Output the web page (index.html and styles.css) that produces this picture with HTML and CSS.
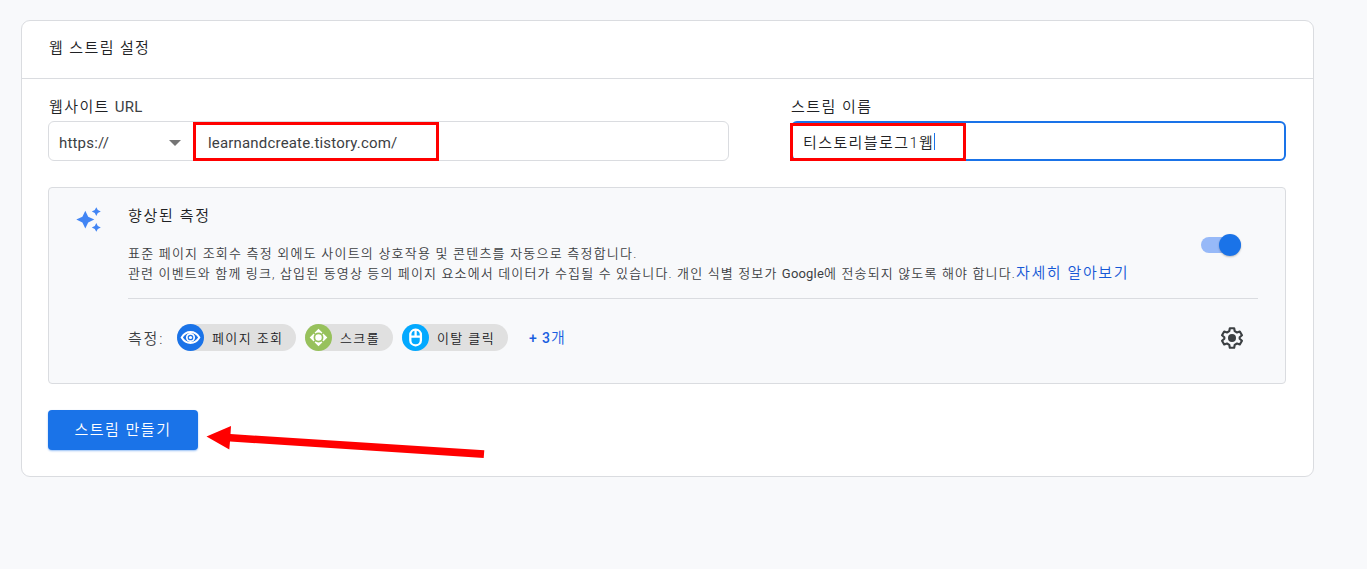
FILE: index.html
```html
<!DOCTYPE html>
<html lang="ko">
<head>
  <meta charset="UTF-8" />
  <meta name="viewport" content="width=device-width, initial-scale=1.0"/>
  <title>웹 스트림 설정</title>

  <link rel="stylesheet" href="styles.css">
</head>

<body>
  <main class="card">
    <header class="card-header"><h1>웹 스트림 설정</h1></header>

    <div class="card-body">
      <div class="fields">
        <div class="field field-url">
          <div class="label">웹사이트 <span class="latin">URL</span></div>
          <div class="input">
            <div class="protocol"><span>https://</span><i class="arrow-down"></i></div>
            <div class="url">learnandcreate.tistory.com/</div>
            <div class="mark mark-url"></div>
          </div>
        </div>
        <div class="field field-name">
          <div class="label">스트림 이름</div>
          <div class="input focused">
            <span class="name">티스토리블로그1웹</span><i class="caret"></i>
            <div class="mark mark-name"></div>
          </div>
        </div>
      </div>

      <section class="enhanced">
        <svg class="sparkle" width="26" height="26" viewBox="0 0 26 26" fill="#4285f4">
          <path d="M9.3 3.7 L12.2 9.7 L18.3 12.6 L12.2 15.5 L9.3 21.5 L6.4 15.5 L0.3 12.6 L6.4 9.7 Z"/>
          <path d="M20.3 0.2 L21.8 3.1 L24.8 4.6 L21.8 6.1 L20.3 9 L18.8 6.1 L15.8 4.6 L18.8 3.1 Z"/>
          <path d="M20.3 16 L21.8 18.9 L24.8 20.4 L21.8 21.9 L20.3 24.8 L18.8 21.9 L15.8 20.4 L18.8 18.9 Z"/>
        </svg>

        <div class="enhanced-body">
          <div class="intro">
            <div>
              <h2>향상된 측정</h2>
              <p>표준 페이지 조회수 측정 외에도 사이트의 상호작용 및 콘텐츠를 자동으로 측정합니다.</p>
              <p class="second">관련 이벤트와 함께 링크, 삽입된 동영상 등의 페이지 요소에서 데이터가 수집될 수 있습니다. 개인 식별 정보가 <span class="latin">Google</span>에 전송되지 않도록 해야 합니다.<a class="more">자세히 알아보기</a></p>
            </div>
            <div class="toggle"><i class="knob"></i></div>
          </div>

          <div class="measure">
            <span class="measure-label">측정:</span>
            <div class="chip chip-view">
              <svg class="chip-icon blue" viewBox="0 0 27 27" fill="none" stroke="#fff">
                <path stroke-width="2" d="M4.7 13.5 Q8 8 13.5 8 T22.3 13.5 Q19 19 13.5 19 T4.7 13.5 Z"/>
                <circle cx="13.5" cy="13.5" r="3.7" stroke-width="1.7"/>
                <circle cx="13.5" cy="13.5" r="1.6" fill="#fff" stroke="none"/>
              </svg>
              <span>페이지 조회</span>
            </div>
            <div class="chip chip-scroll">
              <svg class="chip-icon green" viewBox="0 0 27 27">
                <path fill="#fff" d="M13.5 4.7 L22.3 13.5 L13.5 22.3 L4.7 13.5 Z"/>
                <path stroke="#97c15c" stroke-width="1.2" d="M7.5 7.5 L19.5 19.5 M19.5 7.5 L7.5 19.5"/>
                <circle cx="13.5" cy="13.5" r="4.1" fill="#fff" stroke="#97c15c" stroke-width="1.7"/>
              </svg>
              <span>스크롤</span>
            </div>
            <div class="chip chip-click">
              <svg class="chip-icon cyan" viewBox="0 0 27 27" fill="none" stroke="#fff" stroke-width="2.3">
                <rect x="8.3" y="5.7" width="10.6" height="15.6" rx="5.1"/>
                <path d="M8.3 12.7 H18.9 M13.6 5.7 V12.7"/>
              </svg>
              <span>이탈 클릭</span>
            </div>
            <a class="plus"><b>+ 3</b>개</a>
            <svg class="gear" width="26" height="26" viewBox="0 0 24 24" fill="none" stroke="#3c4043">
              <path stroke-width="2" stroke-linejoin="round" d="M10 3 H14 L14.5 5.7 L16.6 6.9 L19.2 6 L21.2 9.5 L19.1 11.3 V12.7 L21.2 14.5 L19.2 18 L16.6 17.1 L14.5 18.3 L14 21 H10 L9.5 18.3 L7.4 17.1 L4.8 18 L2.8 14.5 L4.9 12.7 V11.3 L2.8 9.5 L4.8 6 L7.4 6.9 L9.5 5.7 Z"/>
              <circle cx="12" cy="12" r="3.7" fill="#3c4043" stroke="none"/>
            </svg>
          </div>
        </div>
      </section>

      <div class="actions">
        <button class="create">스트림 만들기</button>
        <svg class="pointer" width="280" height="36" viewBox="0 0 280 36" fill="#f00">
          <path d="M0.5 10.5 L25 0 L24.5 8 L278.3 24.3 L277.7 32 L24 15.5 L23.3 23.5 Z"/>
        </svg>
      </div>
    </div>
  </main>
</body>
</html>
```
FILE: styles.css
```css
* {
  box-sizing: border-box;
}
body {
  margin: 0;
  padding: 20px 53px 0 21px;
  background-color: #f8f9fb;
  color: #202124;
  font-family: Roboto, "Noto Sans CJK KR", sans-serif;
  font-size: 15px;
  font-weight: 350;
  letter-spacing: 1.4px;
  white-space: nowrap;
}
h1, h2, p {
  margin: 0;
  font-weight: inherit;
}
.latin, .protocol, .url {
  color: #3c4043;
  font-weight: 400;
  letter-spacing: 0.18px;
}
.card {
  height: 457px;
  background-color: #fff;
  border: 1px solid #dadce0;
  border-radius: 9px;
}
.card-header {
  height: 58px;
  padding: 0 27px;
  border-bottom: 1px solid #dadce0;
}
h1 {
  font-size: 15px;
  line-height: 54px;
}
.card-body {
  padding: 17px 27px 0 26px;
}
.fields {
  display: flex;
  justify-content: space-between;
}
.field-url {
  width: 681px;
}
.field-name {
  width: 495px;
}
.label {
  height: 25px;
  line-height: 22px;
  padding-left: 1px;
}
.field-name .label {
  padding-left: 0;
  letter-spacing: 1.5px;
}
.input {
  position: relative;
  display: flex;
  align-items: center;
  height: 40px;
  border: 1px solid #dadce0;
  border-radius: 6px;
}
.input.focused {
  border: 2px solid #1a73e8;
  padding-left: 10px;
}
.protocol {
  display: flex;
  align-items: center;
  justify-content: space-between;
  width: 146px;
  height: 100%;
  padding: 3px 13px 0 10px;
  border-right: 1px solid #dadce0;
}
.arrow-down {
  border: 6px solid transparent;
  border-top-color: #757575;
  border-bottom: 0;
}
.url {
  padding: 3px 0 0 13px;
}
.caret {
  width: 1px;
  height: 17px;
  background-color: #1a73e8;
}
/* red boxes drawn over the inputs */
.mark {
  position: absolute;
  border: 3px solid #f00;
}
.mark-url {
  left: 144px;
  top: 0;
  width: 246px;
  height: 39px;
}
.mark-name {
  left: -3px;
  top: 0;
  width: 176px;
  height: 38px;
}
.enhanced {
  display: flex;
  height: 197px;
  margin-top: 26px;
  padding: 0 27px;
  background-color: #f8f9fb;
  border: 1px solid #dadce0;
  border-radius: 4px;
}
.sparkle {
  flex: none;
  margin-top: 19px;
}
.enhanced-body {
  flex: 1;
  margin-left: 26px;
}
.intro {
  display: flex;
  justify-content: space-between;
  height: 111px;
  border-bottom: 1px solid #dadce0;
}
h2 {
  height: 56px;
  padding-top: 17px;
  font-size: 15px;
  line-height: 22px;
  letter-spacing: 1.7px;
}
.intro p {
  height: 20px;
  color: #3c4043;
  font-size: 13px;
  line-height: 20px;
  letter-spacing: 1.22px;
}
.intro .second {
  line-height: 18px;
  letter-spacing: 1.15px;
}
.intro .latin {
  letter-spacing: 0.2px;
}
.intro .more {
  color: #1558d6;
  font-size: 15px;
  letter-spacing: 1.6px;
}
.toggle {
  display: flex;
  align-items: center;
  justify-content: flex-end;
  width: 40px;
  height: 16px;
  margin: 49px 17px 0 0;
  border-radius: 8px;
  background-color: #97b9f8;
}
.knob {
  flex: none;
  width: 22px;
  height: 22px;
  border-radius: 50%;
  background-color: #1a73e8;
  box-shadow: 0 1px 2px rgba(0, 0, 0, 0.25);
}
.measure {
  display: flex;
  align-items: center;
  height: 77px;
}
.measure-label {
  width: 49px;
  color: #3c4043;
  letter-spacing: 1.8px;
}
.chip {
  display: flex;
  align-items: center;
  height: 27px;
  margin-right: 9px;
  border-radius: 14px;
  background-color: #e0e0e0;
  font-size: 13px;
  letter-spacing: 1.4px;
}
.chip-view {
  width: 119px;
}
.chip-scroll {
  width: 88px;
}
.chip-click {
  width: 106px;
}
.chip-icon {
  flex: none;
  width: 27px;
  height: 27px;
  margin-right: 8px;
  border-radius: 50%;
}
.blue {
  background-color: #1a73e8;
}
.green {
  background-color: #97c15c;
}
.cyan {
  background-color: #03a9ff;
}
.plus {
  margin: -2px 0 0 12px;
  color: #1a5fe0;
  font-size: 15px;
  letter-spacing: 0.3px;
}
.plus b {
  font-size: 14px;
  font-weight: 500;
  letter-spacing: 0.9px;
}
.gear {
  margin: 1px 13px 0 auto;
}
.actions {
  display: flex;
  margin-top: 26px;
}
.create {
  width: 150px;
  height: 40px;
  padding: 0 0 4px;
  border: 0;
  border-radius: 4px;
  background-color: #1a73e8;
  box-shadow: 0 1px 2px rgba(26, 115, 232, 0.45);
  color: #fff;
  font: inherit;
  letter-spacing: 1.5px;
}
.pointer {
  margin: 16px 0 0 8px;
}
```
